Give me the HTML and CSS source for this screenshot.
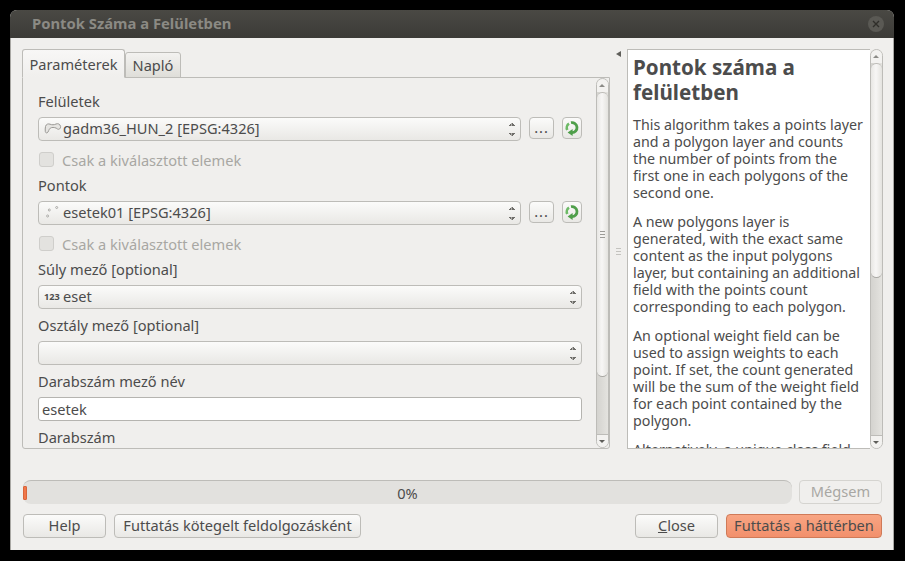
FILE: index.html
```html
<!DOCTYPE html>
<html lang="en">
<head>
    <meta charset="UTF-8">
    <meta name="viewport" content="width=device-width, initial-scale=1.0">
    <title>Pontok Száma a Felületben</title>
    <link rel="stylesheet" href="styles.css">
</head>
<body>
    <div class="window">
        <div class="titlebar">
            <span class="title">Pontok Száma a Felületben</span>
            <span class="close-circle">
                <svg width="8" height="8" viewBox="0 0 8 8"><path d="M1 1 7 7M7 1 1 7" stroke="#2f2e2a" stroke-width="1.4"/></svg>
            </span>
        </div>
        <div class="content">
            <div class="panes">
                <div class="left-pane">
                    <div class="tabs">
                        <div class="tab active">Paraméterek</div>
                        <div class="tab">Napló</div>
                    </div>
                    <div class="tab-body">
                        <div class="form">
                            <div class="label">Felületek</div>
                            <div class="row">
                                <div class="combo">
                                    <svg class="layer-icon" width="18" height="14" viewBox="0 0 18 14"><path d="M1.5 4.5C2 2 4.5 1.5 6 2.2 8 3 10 3 12 2 14 1.2 16 2 16.6 4.5 16.8 6.5 15 8 13.5 7 12 5.6 9.5 5.2 7.5 5.6 5.5 6 5 8 4 10 3 11.5 1.5 11 1.3 9.5 1.1 8 1.2 6 1.5 4.5Z" fill="#e6e5e2" stroke="#9a9995"/></svg>
                                    <span class="combo-text">gadm36_HUN_2 [EPSG:4326]</span>
                                    <span class="spin"></span>
                                </div>
                                <button class="small-btn dots">...</button>
                                <button class="small-btn refresh">
                                    <svg width="16" height="18" viewBox="0 0 16 18"><path d="M3.3 11A5 5 0 0 1 5 4.6" fill="none" stroke="#6dba66" stroke-width="2.6"/><path d="M7 3.7A5 5 0 1 1 8 13.6" fill="none" stroke="#4f9f4a" stroke-width="2.8"/><path d="M8.6 10 8.6 17 3.6 13.6Z" fill="#4f9f4a"/></svg>
                                </button>
                            </div>
                            <div class="check"><span class="box"></span>Csak a kiválasztott elemek</div>
                            <div class="label">Pontok</div>
                            <div class="row">
                                <div class="combo">
                                    <svg class="layer-icon" width="18" height="14" viewBox="0 0 18 14"><circle cx="5.3" cy="4" r="1" fill="#fff" stroke="#8f8e8a" stroke-width=".7"/><circle cx="3.6" cy="10" r="1" fill="#fff" stroke="#8f8e8a" stroke-width=".7"/><circle cx="12.7" cy="1.5" r="1" fill="#fff" stroke="#8f8e8a" stroke-width=".7"/></svg>
                                    <span class="combo-text">esetek01 [EPSG:4326]</span>
                                    <span class="spin"></span>
                                </div>
                                <button class="small-btn dots">...</button>
                                <button class="small-btn refresh">
                                    <svg width="16" height="18" viewBox="0 0 16 18"><path d="M3.3 11A5 5 0 0 1 5 4.6" fill="none" stroke="#6dba66" stroke-width="2.6"/><path d="M7 3.7A5 5 0 1 1 8 13.6" fill="none" stroke="#4f9f4a" stroke-width="2.8"/><path d="M8.6 10 8.6 17 3.6 13.6Z" fill="#4f9f4a"/></svg>
                                </button>
                            </div>
                            <div class="check"><span class="box"></span>Csak a kiválasztott elemek</div>
                            <div class="label">Súly mező [optional]</div>
                            <div class="combo wide">
                                <span class="num-icon">123</span>
                                <span class="combo-text">eset</span>
                                <span class="spin"></span>
                            </div>
                            <div class="label">Osztály mező [optional]</div>
                            <div class="combo wide">
                                <span class="spin"></span>
                            </div>
                            <div class="label">Darabszám mező név</div>
                            <input class="text-input" type="text" value="esetek">
                            <div class="label">Darabszám</div>
                        </div>
                        <div class="scrollbar">
                            <div class="sb-btn up"></div>
                            <div class="sb-thumb form-thumb"><span class="grip"></span></div>
                            <div class="sb-track"></div>
                            <div class="sb-btn down"></div>
                        </div>
                    </div>
                </div>
                <div class="splitter">
                    <span class="collapse"></span>
                    <span class="grip light"></span>
                </div>
                <div class="right-pane">
                    <div class="help">
                        <h2>Pontok száma a<br>felületben</h2>
                        <p>This algorithm takes a points layer<br>and a polygon layer and counts<br>the number of points from the<br>first one in each polygons of the<br>second one.</p>
                        <p>A new polygons layer is<br>generated, with the exact same<br>content as the input polygons<br>layer, but containing an additional<br>field with the points count<br>corresponding to each polygon.</p>
                        <p>An optional weight field can be<br>used to assign weights to each<br>point. If set, the count generated<br>will be the sum of the weight field<br>for each point contained by the<br>polygon.</p>
                        <p>Alternatively, a unique class field</p>
                    </div>
                    <div class="scrollbar">
                        <div class="sb-btn up"></div>
                        <div class="sb-thumb help-thumb"></div>
                        <div class="sb-track"></div>
                        <div class="sb-btn down"></div>
                    </div>
                </div>
            </div>
            <div class="progress-row">
                <div class="progress">
                    <span class="progress-chunk"></span>
                    <span class="progress-text">0%</span>
                </div>
                <button class="btn cancel">Mégsem</button>
            </div>
            <div class="button-row">
                <button class="btn">Help</button>
                <button class="btn batch">Futtatás kötegelt feldolgozásként</button>
                <span class="spacer"></span>
                <button class="btn"><u>C</u>lose</button>
                <button class="btn run">Futtatás a háttérben</button>
            </div>
        </div>
    </div>
</body>
</html>
```

FILE: styles.css
```css
* {
    box-sizing: border-box;
}
html, body {
    height: 100%;
}
body {
    margin: 0;
    padding: 10px 11px 11px 10px;
    background-color: #000;
    font-family: "Noto Sans", sans-serif;
    font-size: 14.6px;
    color: #4c4c4c;
    overflow: hidden;
}
.window {
    height: 540px;
    display: flex;
    flex-direction: column;
    background-color: #f0efed;
    border-radius: 7px 7px 0 0;
    overflow: hidden;
}
.titlebar {
    height: 28px;
    flex: none;
    display: flex;
    align-items: center;
    justify-content: space-between;
    padding: 0 10px 0 22px;
    background: linear-gradient(#4a4944, #3c3b37);
}
.title {
    font-weight: bold;
    color: #8b8a84;
    font-size: 14.8px;
    padding-bottom: 2px;
}
.close-circle {
    width: 16px;
    height: 16px;
    border-radius: 50%;
    background-color: #5a5954;
    display: flex;
    align-items: center;
    justify-content: center;
}
.content {
    flex: 1;
    display: flex;
    flex-direction: column;
    padding: 11px 10px 12px 11px;
    border: 1px solid #a9a8a4;
    border-top: none;
}
.panes {
    display: flex;
    height: 400px;
}
.left-pane {
    width: 588px;
    flex: none;
    display: flex;
    flex-direction: column;
}
.tabs {
    display: flex;
    align-items: flex-end;
    height: 29px;
    flex: none;
    margin-bottom: -1px;
}
.tab {
    height: 26px;
    width: 56px;
    text-align: center;
    line-height: 25px;
    border: 1px solid #bdbcb8;
    border-radius: 3px 3px 0 0;
    background: linear-gradient(#f3f2f0, #dfded9);
}
.tab.active {
    height: 29px;
    width: 103px;
    background: linear-gradient(#f8f7f6, #f0efed);
    border-bottom-color: #f0efed;
    line-height: 28px;
    position: relative;
    z-index: 1;
}
.tab-body {
    flex: 1;
    display: flex;
    border: 1px solid #bdbcb8;
    border-radius: 0 0 3px 3px;
    overflow: hidden;
    justify-content: space-between;
}
.form {
    width: 544px;
    margin-left: 15px;
    padding-top: 13px;
    display: flex;
    flex-direction: column;
    gap: 6px;
    overflow: hidden;
}
.label {
    height: 20px;
    line-height: 20px;
    flex: none;
}
.row {
    display: flex;
    flex: none;
}
.combo {
    height: 24px;
    width: 483px;
    flex: none;
    display: flex;
    align-items: center;
    padding: 0 0 2px 5px;
    border: 1px solid #bdbcb8;
    border-radius: 4px;
    background: linear-gradient(#fbfbfa, #e9e8e5);
    position: relative;
}
.combo.wide {
    width: 544px;
}
.layer-icon {
    flex: none;
    margin: 2px 1px 0 0;
}
.num-icon {
    font-size: 9.2px;
    font-weight: bold;
    width: 19px;
    flex: none;
}
.combo-text {
    white-space: nowrap;
}
.spin {
    position: absolute;
    right: 5px;
    top: 5px;
    width: 7px;
    height: 13px;
    background:
        linear-gradient(to top left, #6e6d69 50%, transparent 51%) left top / 50% 3px no-repeat,
        linear-gradient(to top right, #6e6d69 50%, transparent 51%) right top / 50% 3px no-repeat,
        linear-gradient(to bottom left, #6e6d69 50%, transparent 51%) left bottom / 50% 3px no-repeat,
        linear-gradient(to bottom right, #6e6d69 50%, transparent 51%) right bottom / 50% 3px no-repeat;
}
.small-btn {
    height: 22px;
    padding: 0;
    border: 1px solid #bdbcb8;
    border-radius: 4px;
    background: linear-gradient(#fbfbfa, #e9e8e5);
    font: inherit;
    color: #4c4c4c;
    display: flex;
    align-items: center;
    justify-content: center;
}
.dots {
    width: 25px;
    margin-left: 8px;
    letter-spacing: 1px;
    padding-bottom: 2px;
}
.refresh {
    width: 20px;
    margin-left: 8px;
}
.check {
    height: 20px;
    line-height: 20px;
    margin-top: 2px;
    flex: none;
    display: flex;
    align-items: center;
    color: #a8a7a3;
    padding-top: 1px;
}
.box {
    width: 15px;
    height: 15px;
    margin: 0 8px 0 1px;
    border: 1px solid #cfcecb;
    border-radius: 3px;
    background-color: #e3e2df;
}
.text-input {
    height: 24px;
    width: 544px;
    flex: none;
    padding: 0 3px 1px;
    border: 1px solid #b5b4b0;
    border-radius: 3px;
    background-color: #fff;
    font: inherit;
    color: #4c4c4c;
    outline: none;
}
.scrollbar {
    width: 13px;
    flex: none;
    display: flex;
    flex-direction: column;
    background: linear-gradient(to right, #d4d3cf, #e4e3df);
    border: 1px solid #bdbcb8;
    border-radius: 7px;
    overflow: hidden;
}
.sb-btn {
    height: 13px;
    flex: none;
    background: #f3f2f0;
    position: relative;
}
.sb-btn::after {
    content: "";
    position: absolute;
    left: 2px;
    border-left: 3px solid transparent;
    border-right: 3px solid transparent;
}
.sb-btn.up::after {
    top: 5px;
    border-bottom: 3px solid #8c8b87;
}
.sb-btn.down {
    border-top: 1px solid #bdbcb8;
}
.sb-btn.down::after {
    top: 5px;
    border-top: 3px solid #5f5e5a;
}
.sb-thumb {
    flex: none;
    display: flex;
    align-items: center;
    justify-content: center;
    border-top: 1px solid #bdbcb8;
    border-bottom: 1px solid #a9a8a4;
    border-radius: 6px;
    background: linear-gradient(to right, #e8e7e4, #f7f6f5 45%, #e4e3df);
}
.form-thumb {
    height: 285px;
}
.help-thumb {
    height: 215px;
}
.sb-track {
    flex: 1;
}
.grip {
    display: block;
    width: 5px;
    height: 7px;
    background: repeating-linear-gradient(#9c9b97 0 1px, transparent 1px 3px);
}
.grip.light {
    background: repeating-linear-gradient(#c4c3bf 0 1px, transparent 1px 3px);
}
.splitter {
    width: 17px;
    flex: none;
    display: flex;
    flex-direction: column;
    align-items: center;
    padding-top: 2px;
}
.collapse {
    width: 0;
    height: 0;
    margin-bottom: 191px;
    border-top: 3px solid transparent;
    border-bottom: 3px solid transparent;
    border-right: 5px solid #5f5e5a;
}
.right-pane {
    flex: 1;
    display: flex;
    min-width: 0;
}
.help {
    flex: 1;
    min-width: 0;
    background-color: #fff;
    border: 1px solid #bdbcb8;
    border-right: none;
    padding: 5px 0 0 5px;
    overflow: hidden;
    white-space: nowrap;
    font-size: 14.25px;
    line-height: 17px;
}
.help h2 {
    margin: 0 0 11px;
    font-size: 20.6px;
    line-height: 25px;
}
.help p {
    margin: 0 0 12px;
}
.progress-row {
    display: flex;
    margin-top: 31px;
    padding: 0 1px;
}
.progress {
    width: 769px;
    height: 24px;
    border-top: 1px solid #bdbcb8;
    border-radius: 8px;
    background-color: #e2e1de;
    display: flex;
    align-items: center;
    justify-content: center;
    position: relative;
}
.progress-chunk {
    position: absolute;
    left: 0;
    top: 5px;
    width: 4px;
    height: 14px;
    background-color: #f0774a;
    border: 1px solid #d9653a;
    border-radius: 1px;
}
.btn {
    height: 24px;
    width: 83px;
    flex: none;
    padding: 0 0 2px;
    border: 1px solid #bdbcb8;
    border-radius: 4px;
    background: linear-gradient(#fbfbfa, #e9e8e5);
    font: inherit;
    color: #4c4c4c;
}
.btn.cancel {
    margin-left: 7px;
    color: #a8a7a3;
    background: #f0efed;
    border-color: #d5d4d0;
}
.button-row {
    display: flex;
    gap: 8px;
    margin-top: 10px;
    padding: 0 1px;
}
.btn.batch {
    width: 247px;
}
.btn.run {
    width: 156px;
    border-color: #cf7a58;
    background: linear-gradient(#f8a583, #f2906c);
}
.spacer {
    flex: 1;
}
```
